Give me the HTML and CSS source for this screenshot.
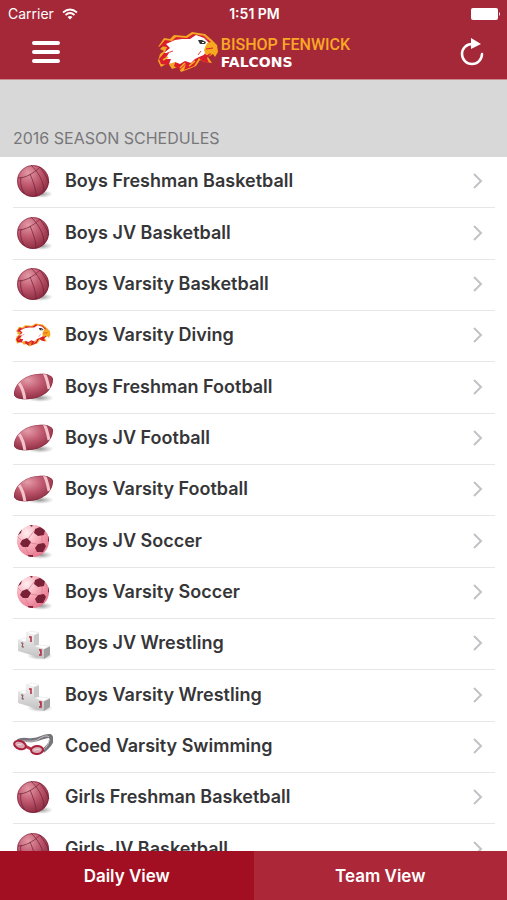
FILE: index.html
```html
<!DOCTYPE html>
<html lang="en">
    <head>
        <meta charset="UTF-8" />
        <meta name="viewport" content="width=device-width, initial-scale=1" />
        <title>Bishop Fenwick Falcons</title>
        <link rel="stylesheet" href="styles.css">
    </head>
    <body>
        <!-- shared icons -->
        <svg class="defs" width="0" height="0" aria-hidden="true">
            <defs>
                <radialGradient id="ballFill" cx="35%" cy="25%" r="75%">
                    <stop offset="0" stop-color="#e39ba7" />
                    <stop offset=".5" stop-color="#c05a70" />
                    <stop offset="1" stop-color="#8f2e44" />
                </radialGradient>
                <radialGradient id="soccerFill" cx="30%" cy="25%" r="80%">
                    <stop offset="0" stop-color="#fff0f2" />
                    <stop offset=".5" stop-color="#f7aab8" />
                    <stop offset="1" stop-color="#e87890" />
                </radialGradient>
                <radialGradient id="shadow">
                    <stop offset="0" stop-color="#777" stop-opacity=".8" />
                    <stop offset="1" stop-color="#999" stop-opacity="0" />
                </radialGradient>
                <linearGradient id="boxFill" x1="0" y1="0" x2="0" y2="1">
                    <stop offset="0" stop-color="#f2f2f2" />
                    <stop offset="1" stop-color="#c0c0c0" />
                </linearGradient>
                <clipPath id="soccerClip"><circle cx="20" cy="20" r="16" /></clipPath>
                <clipPath id="footballClip"><path d="M1 28C1 17 11 8 25 7c8-1 14 1 15 5 0 10-9 19-23 20C9 33 3 32 1 28z" /></clipPath>
            </defs>
            <symbol id="basketball" viewBox="0 0 40 40">
                <ellipse cx="28" cy="33" rx="12" ry="4" fill="url(#shadow)" />
                <circle cx="20" cy="20" r="16" fill="url(#ballFill)" />
                <g fill="none" stroke="#6f1e34" stroke-width="1" stroke-opacity=".7">
                    <path d="M5 17C12 17 20 13 27 6M18 4C25 11 31 20 31 31M17 13C20 20 23 28 23 35M27 6C31 12 34 16 36 22M8 16C7 22 8 28 12 33" />
                    <circle cx="20" cy="20" r="15.5" stroke-opacity=".4" />
                </g>
            </symbol>
            <symbol id="football" viewBox="0 0 40 40">
                <ellipse cx="27" cy="31" rx="14" ry="4" fill="url(#shadow)" />
                <path d="M1 28C1 17 11 8 25 7c8-1 14 1 15 5 0 10-9 19-23 20C9 33 3 32 1 28z" fill="url(#ballFill)" />
                <g clip-path="url(#footballClip)" fill="none">
                    <path d="M6 16c3 4 5 10 6 17M31 6c3 5 4 11 5 16" stroke="#f3c3cb" stroke-width="3" />
                    <path d="M1 28C1 17 11 8 25 7c8-1 14 1 15 5 0 10-9 19-23 20C9 33 3 32 1 28z" stroke="#6f1b30" stroke-opacity=".5" />
                </g>
            </symbol>
            <symbol id="soccer" viewBox="0 0 40 40">
                <ellipse cx="28" cy="34" rx="12" ry="4" fill="url(#shadow)" />
                <circle cx="20" cy="20" r="16" fill="url(#soccerFill)" />
                <g clip-path="url(#soccerClip)">
                    <path d="M21 10l-6 8M29 14l0 9M17 22l7 1M12 26l4 8M32 12l4 2M8 19l-4-4M24 28l-5 6" fill="none" stroke="#d98092" stroke-width=".8" />
                    <path d="M22 8l5-2 5 3-1 5-6 1-4-3zM9 19l5-2 4 4-3 5-5 0-3-3zM25 23l6-1 2 3-3 6-6 0-2-4zM35 15l3-1 0 8-3-2zM15 34l5 0 0 3-5 0zM6 10l3-2-1 4-4 3zM15 3l5 0-1 3z" fill="#792137" />
                </g>
            </symbol>
            <symbol id="podium" viewBox="0 0 40 40">
                <ellipse cx="27" cy="33" rx="13" ry="4" fill="url(#shadow)" />
                <!-- front faces -->
                <path d="M5 17l8 0V10l8 2v11l10 3v10L5 28z" fill="url(#boxFill)" />
                <path d="M21 12l5-2v12l-5 2z" fill="#c9c9c9" />
                <path d="M31 26l6-3v9l-6 4z" fill="#a0a0a0" />
                <!-- tops -->
                <path d="M13 10l6-2 7 2-5 2zM5 17l8-2v4zM21 23l5-1 11 1-6 3z" fill="#fff" stroke="#ddd" stroke-width=".5" />
                <path d="M16 14l2 0v5" fill="none" stroke="#b22a3c" stroke-width="1.5" />
                <path d="M8 20h2l-1 4h2" fill="none" stroke="#824c54" />
                <path d="M26 27h2v2h-1M28 29v3h-2" fill="none" stroke="#b22a3c" stroke-width="1.5" />
            </symbol>
            <symbol id="goggles" viewBox="0 0 40 40">
                <g fill="none">
                    <path d="M5 15C10 12 15 15 20 14c7 0 11-5 17-4 4 4 0 9-7 15" stroke="#77737a" stroke-width="4" />
                    <path d="M8 15c8 0 14 1 18-2 4-3 8-4 10-2M36 14c0 4-3 8-6 10" stroke="#cbc8cc" />
                    <path d="M12 20l6 3" stroke="#b93049" stroke-width="3" />
                </g>
                <ellipse cx="7" cy="19" rx="6" ry="4" transform="rotate(20 7 19)" fill="#d7aab3" stroke="#aa213d" stroke-width="2" />
                <ellipse cx="24" cy="24" rx="6" ry="4" transform="rotate(-5 24 24)" fill="#d7aab3" stroke="#aa213d" stroke-width="2" />
                <path d="M4 19l5-1M21 24l6-1" stroke="#f4dce0" />
            </symbol>
            <symbol id="falcon" viewBox="0 0 62 42">
                <path d="M1 16L7 7 13 8 17 4 29 5 35 1 48 3 55 9 60 14 61 21 58 26 56 23 51 26 55 32 48 31 43 29 39 35 32 38 24 41 21 36 15 38 11 32 4 36 1 30 3 23 7 20 3 18 8 13z" fill="#f5a623" />
                <path d="M3 15l5-6 7 1 4-4 11 1 6-4 11 2 7 6-8 4 8 8-4 4 2 5-7-2-3-3-5 8-10 4 2-6-6 6-6-4 2-6-8 5-7-1-2-5 6-7 2-5z" fill="#d91f2b" />
                <path d="M9 13l9-4 7-1 8 0 6-4 8 3 5 5-4 4 1 7-7 3-4 2-4 4-6-2-5 3-5-2-6 2 2-5-6 0 4-6-5 0 6-5z" fill="#fff" />
                <path d="M50 12c5-2 10 2 10 7l-2 6-3-4-6 4-2-6z" fill="#f7a81f" />
                <path d="M49 18l7-1M52 26l-5-3" stroke="#d91f2b" fill="none" />
                <path d="M41 9l4 0 4 2-1 2-5 0z" fill="#333" />
                <path d="M45 11h2v1h-2z" fill="#fff" />
                <path d="M45 4l6 5M10 22l6-2M44 20l-3 4" stroke="#e04a50" fill="none" />
                <path d="M6 29l5-3M23 37l5-5M32 35l6-5" stroke="#f7b02a" stroke-width="1.5" fill="none" />
            </symbol>
            <symbol id="chevron" viewBox="0 0 10 16">
                <path d="M1 1l7 7-7 7" fill="none" stroke="#c2c2c6" stroke-width="2" />
            </symbol>
        </svg>

        <header class="header">
            <div class="status">
                <div class="carrier">
                    Carrier
                    <svg width="16" height="12" viewBox="0 0 16 12" aria-hidden="true">
                        <path d="M1 4.5Q8-1.5 15 4.5M3.5 7Q8 3 12.5 7" fill="none" stroke="#fff" stroke-width="1.7" />
                        <path d="M5.5 9q2.5-2 5 0L8 11.5z" fill="#fff" />
                    </svg>
                </div>
                <div class="clock">1:51 PM</div>
                <div class="battery">
                    <svg width="30" height="12" viewBox="0 0 30 12" aria-hidden="true">
                        <rect width="27" height="12" rx="2" fill="#fff" />
                        <path d="M28 4q2 2 0 4z" fill="#fff" />
                    </svg>
                </div>
            </div>
            <div class="navbar">
                <button type="button" class="icon-btn" aria-label="Menu">
                    <svg width="28" height="24" viewBox="0 0 28 24">
                        <path d="M2 3h24M2 12h24M2 21h24" stroke="#fff" stroke-width="4" stroke-linecap="round" />
                    </svg>
                </button>
                <a class="brand" href="#">
                    <svg class="brand-logo" aria-hidden="true"><use href="#falcon" /></svg>
                    <span class="brand-text">
                        <span class="brand-school">BISHOP FENWICK</span>
                        <span class="brand-team">FALCONS</span>
                    </span>
                </a>
                <button type="button" class="icon-btn" aria-label="Refresh">
                    <svg width="26" height="28" viewBox="0 0 26 28">
                        <path d="M13 6a10 10 0 1 0 10 10" fill="none" stroke="#fff" stroke-width="2.5" stroke-linecap="round" />
                        <path d="M12 0l10 6-10 5z" fill="#fff" />
                    </svg>
                </button>
            </div>
        </header>

        <main class="content">
            <h2 class="section-title">2016 SEASON SCHEDULES</h2>
            <ul class="teams">
                <li><a class="team" href="#"><svg class="sport"><use href="#basketball" /></svg><span class="name">Boys Freshman Basketball</span><svg class="arrow"><use href="#chevron" /></svg></a></li>
                <li><a class="team" href="#"><svg class="sport"><use href="#basketball" /></svg><span class="name">Boys JV Basketball</span><svg class="arrow"><use href="#chevron" /></svg></a></li>
                <li><a class="team" href="#"><svg class="sport"><use href="#basketball" /></svg><span class="name">Boys Varsity Basketball</span><svg class="arrow"><use href="#chevron" /></svg></a></li>
                <li><a class="team" href="#"><svg class="sport sport-falcon"><use href="#falcon" /></svg><span class="name">Boys Varsity Diving</span><svg class="arrow"><use href="#chevron" /></svg></a></li>
                <li><a class="team" href="#"><svg class="sport"><use href="#football" /></svg><span class="name">Boys Freshman Football</span><svg class="arrow"><use href="#chevron" /></svg></a></li>
                <li><a class="team" href="#"><svg class="sport"><use href="#football" /></svg><span class="name">Boys JV Football</span><svg class="arrow"><use href="#chevron" /></svg></a></li>
                <li><a class="team" href="#"><svg class="sport"><use href="#football" /></svg><span class="name">Boys Varsity Football</span><svg class="arrow"><use href="#chevron" /></svg></a></li>
                <li><a class="team" href="#"><svg class="sport"><use href="#soccer" /></svg><span class="name">Boys JV Soccer</span><svg class="arrow"><use href="#chevron" /></svg></a></li>
                <li><a class="team" href="#"><svg class="sport"><use href="#soccer" /></svg><span class="name">Boys Varsity Soccer</span><svg class="arrow"><use href="#chevron" /></svg></a></li>
                <li><a class="team" href="#"><svg class="sport"><use href="#podium" /></svg><span class="name">Boys JV Wrestling</span><svg class="arrow"><use href="#chevron" /></svg></a></li>
                <li><a class="team" href="#"><svg class="sport"><use href="#podium" /></svg><span class="name">Boys Varsity Wrestling</span><svg class="arrow"><use href="#chevron" /></svg></a></li>
                <li><a class="team" href="#"><svg class="sport"><use href="#goggles" /></svg><span class="name">Coed Varsity Swimming</span><svg class="arrow"><use href="#chevron" /></svg></a></li>
                <li><a class="team" href="#"><svg class="sport"><use href="#basketball" /></svg><span class="name">Girls Freshman Basketball</span><svg class="arrow"><use href="#chevron" /></svg></a></li>
                <li><a class="team" href="#"><svg class="sport"><use href="#basketball" /></svg><span class="name">Girls JV Basketball</span><svg class="arrow"><use href="#chevron" /></svg></a></li>
            </ul>
        </main>

        <nav class="tabs">
            <button type="button" class="tab active">Daily View</button>
            <button type="button" class="tab">Team View</button>
        </nav>
    </body>
</html>
```
FILE: styles.css
```css
* {
    box-sizing: border-box;
}
body {
    margin: 0;
    height: 100vh;
    display: flex;
    flex-direction: column;
    background-color: #fff;
    color: #363638;
    font-family: Inter, "Liberation Sans", sans-serif;
}
button {
    border: 0;
    padding: 0;
    background: none;
    color: inherit;
    font-family: inherit;
}
.defs {
    position: absolute;
}
.header {
    flex: none;
    background-color: #a52838;
    border-bottom: 1px solid #c98a90;
    color: #fff;
}
.status {
    display: flex;
    align-items: center;
    height: 27px;
    padding: 0 6px 0 8px;
    font-size: 14px;
}
.carrier,
.battery {
    flex: 1;
    display: flex;
    align-items: center;
    gap: 8px;
}
.battery {
    justify-content: flex-end;
}
.clock {
    font-weight: 600;
}
.navbar {
    display: flex;
    align-items: center;
    justify-content: space-between;
    height: 52px;
    padding: 0 22px 2px 32px;
}
.icon-btn {
    display: flex;
}
.brand {
    display: flex;
    align-items: center;
    gap: 2px;
    margin-right: 12px;
    color: #fff;
    text-decoration: none;
}
.brand-logo {
    width: 62px;
    height: 42px;
}
.brand-text {
    display: flex;
    flex-direction: column;
    padding-top: 2px;
}
.brand-school {
    color: #f9a825;
    font-family: Roboto, sans-serif;
    font-size: 16px;
    font-weight: 500;
    line-height: 18px;
    white-space: nowrap;
}
.brand-team {
    font-family: "DejaVu Sans", sans-serif;
    font-size: 14px;
    font-weight: bold;
    line-height: 16px;
}
.content {
    flex: 1;
    min-height: 0;
    overflow-y: auto;
    scrollbar-width: none;
}
.section-title {
    margin: 0;
    padding: 48px 13px 9px;
    background-color: #d8d8d8;
    color: #77777a;
    font-size: 16px;
    font-weight: 400;
    line-height: 20px;
}
.teams {
    margin: 0;
    padding: 0 12px 0 13px;
    list-style: none;
}
.team {
    display: flex;
    align-items: center;
    height: 51px;
    padding-bottom: 2px;
    border-bottom: 1px solid #e6e6e8;
    color: inherit;
    text-decoration: none;
}
li:nth-child(3n + 2) .team {
    height: 52px;
}
.sport {
    flex: none;
    width: 40px;
    height: 40px;
    margin-right: 12px;
}
.sport-falcon {
    padding: 0 2px;
}
.name {
    flex: 1;
    padding-bottom: 1px;
    font-size: 18px;
    font-weight: 600;
}
.arrow {
    width: 10px;
    height: 16px;
    margin-right: 12px;
}
.tabs {
    flex: none;
    display: flex;
    height: 49px;
    background-color: #ac2839;
    color: #fff;
}
.tab {
    flex: 1;
    font-size: 17px;
    font-weight: 600;
}
.active {
    background-color: #a30f22;
}
```
